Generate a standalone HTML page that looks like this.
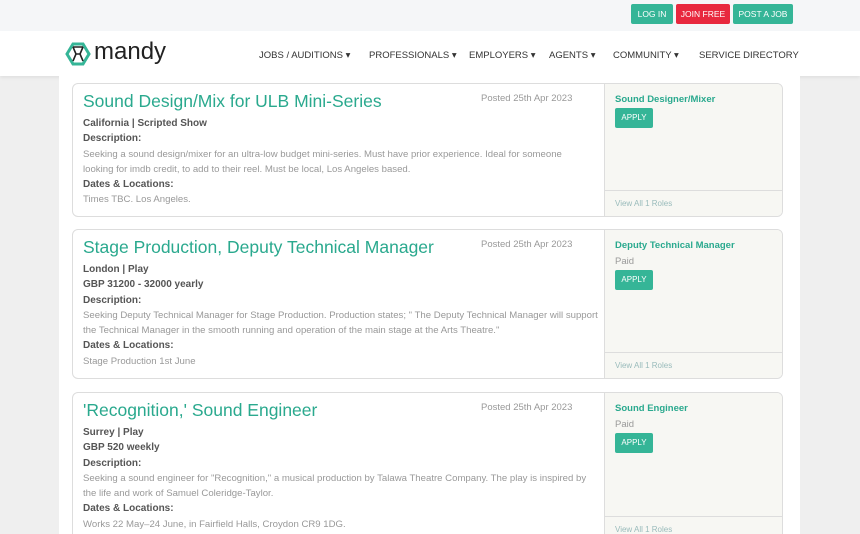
<!DOCTYPE html>
<html style="overflow:hidden;width:860px;height:534px"><head><meta charset="utf-8">
<style>
*{box-sizing:border-box;margin:0;padding:0}
body{width:860px;height:534px;overflow:hidden;background:#efefef;font-family:"Liberation Sans",sans-serif;position:relative}
.top{position:absolute;left:0;top:0;width:860px;height:31px;background:#f5f6f8}
.tb{position:absolute;top:4px;height:20px;color:#fff;font-size:8.5px;line-height:20px;text-align:center;border-radius:2px}
.hdr{position:absolute;left:0;top:31px;width:860px;height:45px;background:#fff;box-shadow:0 2px 3px rgba(0,0,0,.06)}
.nav{position:absolute;top:50px;font-size:9.5px;color:#333;white-space:nowrap}
.col{position:absolute;left:59px;top:76px;width:741px;height:460px;background:#fff}
.card{position:absolute;left:72px;width:711px;border:1px solid #ddd;border-radius:6px;background:#fff;overflow:hidden}
.r{position:absolute;right:0;top:0;width:178px;height:100%;background:#f7f7f3;border-left:1px solid #ddd}
.r .ft{position:absolute;left:0;right:0;bottom:0;height:26px;border-top:1px solid #ddd;font-size:8px;color:#9bb;padding:8px 10px}
.t{position:absolute;left:10px;top:7px;font-size:17.5px;color:#2aa98e;white-space:nowrap}
.p{position:absolute;left:408px;top:9px;font-size:9.5px;color:#999}
.b{position:absolute;left:10px;font-size:10px;color:#555;line-height:15.3px;white-space:nowrap}
.b b{color:#555}
.b span{color:#999;font-size:9.6px}
.role{position:absolute;left:10px;top:10px;font-size:9.5px;font-weight:bold;color:#2aa98e}
.paid{position:absolute;left:10px;top:26px;font-size:9.5px;color:#999}
.ap{position:absolute;left:10px;width:38px;height:20px;background:#35b597;border-radius:2px;color:#fff;font-size:8px;line-height:20px;text-align:center}
</style></head><body>
<div class="top"></div>
<div class="tb" style="left:631px;width:42px;background:#35b597">LOG IN</div>
<div class="tb" style="left:676px;width:54px;background:#e8283e">JOIN FREE</div>
<div class="tb" style="left:733px;width:60px;background:#35b597">POST A JOB</div>
<div class="hdr"></div>
<svg style="position:absolute;left:65px;top:41px" width="26" height="26" viewBox="0 0 26 26">
<path d="M8 3 L18 3 L24 13 L18 23 L8 23 L2 13 Z" fill="none" stroke="#35b597" stroke-width="3"/>
<path d="M8 6 L11 13 L8 20 M18 6 L15 13 L18 20 M11 13 L15 13 M8 6 L18 6" fill="none" stroke="#222" stroke-width="1.6"/>
</svg>
<div style="position:absolute;left:94px;top:38px;font-size:24px;color:#222">mandy</div>
<div class="nav" style="left:259px">JOBS / AUDITIONS ▾</div>
<div class="nav" style="left:369px">PROFESSIONALS ▾</div>
<div class="nav" style="left:469px">EMPLOYERS ▾</div>
<div class="nav" style="left:549px">AGENTS ▾</div>
<div class="nav" style="left:613px">COMMUNITY ▾</div>
<div class="nav" style="left:699px">SERVICE DIRECTORY</div>
<div class="col"></div>

<div class="card" style="top:83px;height:134px">
<div class="t">Sound Design/Mix for ULB Mini-Series</div><div class="p">Posted 25th Apr 2023</div>
<div class="b" style="top:32px"><b>California | Scripted Show</b><br><b>Description:</b><br><span>Seeking a sound design/mixer for an ultra-low budget mini-series. Must have prior experience. Ideal for someone<br>looking for imdb credit, to add to their reel. Must be local, Los Angeles based.</span><br><b>Dates &amp; Locations:</b><br><span>Times TBC. Los Angeles.</span></div>
<div class="r"><div class="role">Sound Designer/Mixer</div><div class="ap" style="top:24px">APPLY</div><div class="ft">View All 1 Roles</div></div>
</div>

<div class="card" style="top:229px;height:150px">
<div class="t">Stage Production, Deputy Technical Manager</div><div class="p">Posted 25th Apr 2023</div>
<div class="b" style="top:32px"><b>London | Play</b><br><b>GBP 31200 - 32000 yearly</b><br><b>Description:</b><br><span>Seeking Deputy Technical Manager for Stage Production. Production states; " The Deputy Technical Manager will support<br>the Technical Manager in the smooth running and operation of the main stage at the Arts Theatre."</span><br><b>Dates &amp; Locations:</b><br><span>Stage Production 1st June</span></div>
<div class="r"><div class="role">Deputy Technical Manager</div><div class="paid">Paid</div><div class="ap" style="top:40px">APPLY</div><div class="ft">View All 1 Roles</div></div>
</div>

<div class="card" style="top:392px;height:160px">
<div class="t">'Recognition,' Sound Engineer</div><div class="p">Posted 25th Apr 2023</div>
<div class="b" style="top:32px"><b>Surrey | Play</b><br><b>GBP 520 weekly</b><br><b>Description:</b><br><span>Seeking a sound engineer for "Recognition," a musical production by Talawa Theatre Company. The play is inspired by<br>the life and work of Samuel Coleridge-Taylor.</span><br><b>Dates &amp; Locations:</b><br><span>Works 22 May–24 June, in Fairfield Halls, Croydon CR9 1DG.</span></div>
<div class="r"><div class="role">Sound Engineer</div><div class="paid">Paid</div><div class="ap" style="top:40px">APPLY</div><div class="ft" style="bottom:auto;top:123px">View All 1 Roles</div></div>
</div>
</body></html>
